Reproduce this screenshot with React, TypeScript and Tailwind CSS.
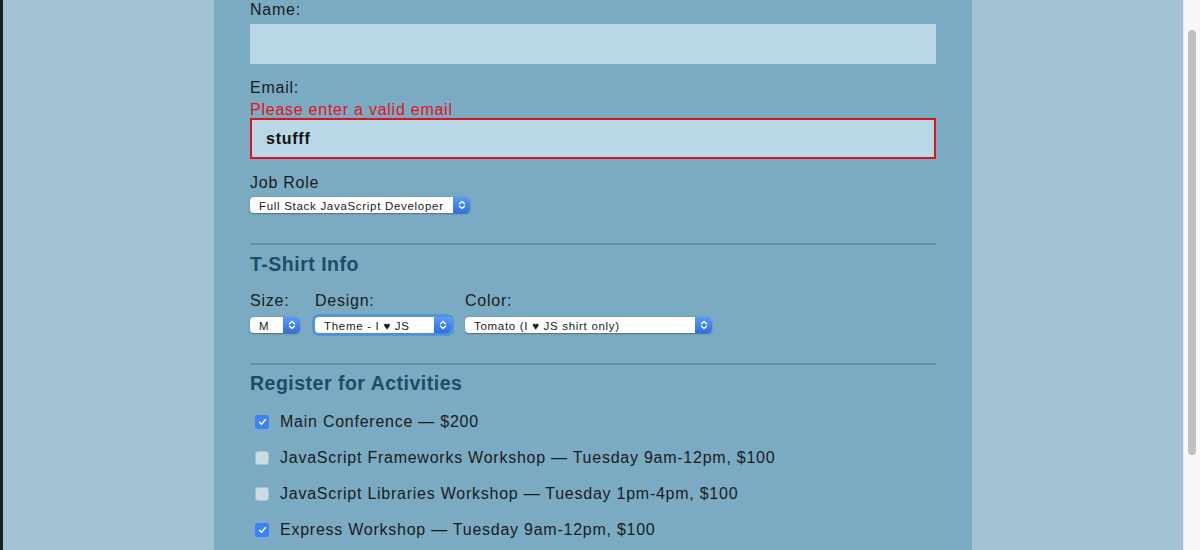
import React from 'react';

function Arrows() {
  return (
    <svg width="8" height="10" viewBox="0 0 8 10" fill="none" stroke="white" strokeWidth="1.4" strokeLinecap="round" strokeLinejoin="round">
      <path d="M1.5 3.8 L4 1.5 L6.5 3.8" />
      <path d="M1.5 6.2 L4 8.5 L6.5 6.2" />
    </svg>
  );
}

function FakeSelect({ value, width, focused }: { value: string; width: string; focused?: boolean }) {
  return (
    <div
      className={`${width} h-[16px] flex items-center justify-between bg-white rounded-[4px] shadow-[0_0.5px_1.5px_rgba(0,0,0,0.35)] ${
        focused ? 'ring-[3px] ring-[#4d8fe0]/80' : ''
      }`}
    >
      <span className="pl-[9px] pt-[1px] text-[11.5px] leading-[16px] text-[#1a1a1a] tracking-[0.7px] whitespace-nowrap">{value}</span>
      <span className="h-[16px] w-[17px] flex items-center justify-center rounded-r-[4px] bg-gradient-to-b from-[#5a9cf8] to-[#2c6fe6]">
        <Arrows />
      </span>
    </div>
  );
}

function Check({ checked }: { checked: boolean }) {
  if (checked) {
    return (
      <span className="w-[14px] h-[14px] rounded-[3px] bg-[#3a82f7] flex items-center justify-center">
        <svg width="9" height="8" viewBox="0 0 9 8" fill="none" stroke="white" strokeWidth="1.5" strokeLinecap="round" strokeLinejoin="round">
          <path d="M1.5 4.2 L3.6 6.3 L7.5 1.6" />
        </svg>
      </span>
    );
  }
  return <span className="w-[14px] h-[14px] rounded-[3px] bg-[#cadbe5] border border-[#a9c2d1]" />;
}

const activities = [
  { label: 'Main Conference — $200', checked: true },
  { label: 'JavaScript Frameworks Workshop — Tuesday 9am-12pm, $100', checked: false },
  { label: 'JavaScript Libraries Workshop — Tuesday 1pm-4pm, $100', checked: false },
  { label: 'Express Workshop — Tuesday 9am-12pm, $100', checked: true },
];

export default function App() {
  return (
    <div className="h-[550px] w-[1200px] flex overflow-hidden bg-[#a3c3d4] font-['Liberation_Sans',Arial,sans-serif] text-[#1b1b1b]">
      <div className="w-[3px] bg-[#1b2026]" />
      <div className="flex-1 flex justify-center">
        <div className="w-[758px] bg-[#7aabc3] px-[36px] text-[16px] tracking-[0.75px]">
          <label className="block leading-[20px]">Name:</label>
          <div className="mt-[4px] h-[40px] bg-[#b8d8e8]" />

          <label className="block mt-[14px] leading-[20px]">Email:</label>
          <p className="leading-[17px] text-[#e8101a] mt-[3px]">Please enter a valid email</p>
          <div className="h-[41px] bg-[#b8d8e8] border-2 border-[#d9141e] flex items-center pl-[14px] font-bold text-[#111]">
            stufff
          </div>

          <label className="block mt-[14px] leading-[20px]">Job Role</label>
          <div className="mt-[4px]">
            <FakeSelect value="Full Stack JavaScript Developer" width="w-[220px]" />
          </div>

          <hr className="mt-[30px] border-0 h-[2px] bg-[#5f90aa]" />
          <h2 className="mt-[8px] text-[19.5px] leading-[22px] font-bold tracking-[0.5px] text-[#1d4d65]">T-Shirt Info</h2>

          <div className="mt-[16px] flex">
            <div className="w-[65px]">
              <label className="block leading-[20px]">Size:</label>
              <div className="mt-[6px]">
                <FakeSelect value="M" width="w-[50px]" />
              </div>
            </div>
            <div className="w-[150px]">
              <label className="block leading-[20px]">Design:</label>
              <div className="mt-[6px]">
                <FakeSelect value="Theme - I ♥ JS" width="w-[136px]" focused />
              </div>
            </div>
            <div>
              <label className="block leading-[20px]">Color:</label>
              <div className="mt-[6px]">
                <FakeSelect value="Tomato (I ♥ JS shirt only)" width="w-[247px]" />
              </div>
            </div>
          </div>

          <hr className="mt-[30px] border-0 h-[2px] bg-[#5f90aa]" />
          <h2 className="mt-[7px] text-[19.5px] leading-[22px] font-bold tracking-[0.5px] text-[#1d4d65]">Register for Activities</h2>

          <div className="mt-[18px] flex flex-col gap-[16px]">
            {activities.map((a) => (
              <div key={a.label} className="flex items-center h-[20px] pl-[5px]">
                <Check checked={a.checked} />
                <span className="ml-[11px] leading-[20px]">{a.label}</span>
              </div>
            ))}
          </div>
        </div>
      </div>
      <div className="w-[17px] bg-[#f8f8f8] border-l border-[#e8e8e8] pt-[30px]">
        <div className="mx-auto w-[8px] h-[425px] rounded-full bg-[#c1c1c1]" />
      </div>
    </div>
  );
}
